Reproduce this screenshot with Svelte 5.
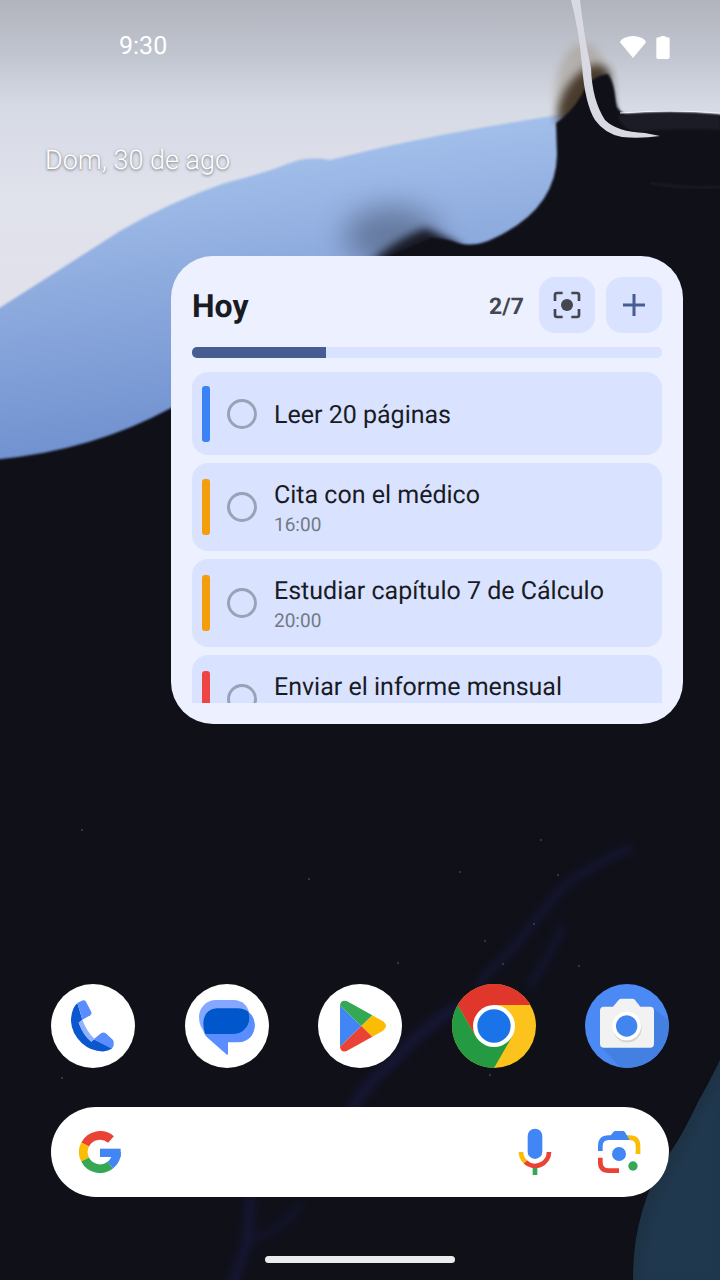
<script lang="ts">
  let tasks = $state([
    { id: 'leer', title: 'Leer 20 páginas', color: '#3b82f6', timed: false, time: '', done: false },
    { id: 'cita', title: 'Cita con el médico', color: '#f59e0b', timed: true, time: '16:00', done: false },
    { id: 'estudiar', title: 'Estudiar capítulo 7 de Cálculo', color: '#f59e0b', timed: true, time: '20:00', done: false },
    { id: 'informe', title: 'Enviar el informe mensual', color: '#ef4444', timed: true, time: '', done: false }
  ]);

  const total = 7;
  const alreadyDone = 2;
  let completed = $derived(alreadyDone + tasks.filter((t) => t.done).length);

  const apps = [
    { name: 'Teléfono', icon: 'phone' },
    { name: 'Mensajes', icon: 'messages' },
    { name: 'Play Store', icon: 'play' },
    { name: 'Chrome', icon: 'chrome' },
    { name: 'Cámara', icon: 'camera' }
  ];

  const stars = [
    [460, 872], [541, 840], [398, 963], [82, 830], [485, 941], [558, 875],
    [534, 924], [503, 964], [579, 966], [490, 1075], [309, 879], [62, 1078]
  ];
</script>

<main class="screen">
  <svg class="wallpaper" viewBox="0 0 720 1280" preserveAspectRatio="xMidYMid slice" color-interpolation-filters="sRGB" aria-hidden="true">
    <defs>
      <linearGradient id="sky" x1="0" y1="0" x2="0" y2="1">
        <stop offset="0" stop-color="#b1b4bd" />
        <stop offset="0.12" stop-color="#c0c4ce" />
        <stop offset="0.24" stop-color="#d6dae4" />
        <stop offset="0.45" stop-color="#e0e2ec" />
        <stop offset="1" stop-color="#e2e0e8" />
      </linearGradient>
      <linearGradient id="wave" gradientUnits="userSpaceOnUse" x1="200" y1="150" x2="240" y2="440">
        <stop offset="0" stop-color="#a5c1ec" />
        <stop offset="0.4" stop-color="#8facdf" />
        <stop offset="1" stop-color="#6f90cf" />
      </linearGradient>
      <filter id="soft1" x="-20%" y="-20%" width="140%" height="140%"><feGaussianBlur stdDeviation="1" /></filter>
      <filter id="soft4" x="-30%" y="-30%" width="160%" height="160%"><feGaussianBlur stdDeviation="4" /></filter>
      <filter id="soft14" x="-60%" y="-80%" width="220%" height="260%"><feGaussianBlur stdDeviation="14" /></filter>
    </defs>
    <rect width="720" height="1280" fill="#0f1018" />
    <path d="M0 0H720V116H560L480 250L200 440L0 440Z" fill="url(#sky)" />
    <path d="M-10 314Q75 260 120 231Q170 202 225 183Q265 173 290 163Q308 156 330 160Q400 142 480 128L570 113V200L480 260L200 470L-10 480Z" fill="url(#wave)" filter="url(#soft1)" />
    <ellipse cx="392" cy="236" rx="48" ry="30" fill="#4b5a78" opacity="0.6" filter="url(#soft14)" />
    <path d="M370 262Q395 240 425 228Q445 236 462 246L440 268Z" fill="#1a1c28" filter="url(#soft4)" />
    <path d="M556 112Q552 66 574 46Q592 38 602 58L612 118Z" fill="#a59b8d" opacity="0.55" filter="url(#soft4)" />
    <path d="M557 122Q558 92 578 74Q598 56 610 72L614 122Z" fill="#3d3020" opacity="0.9" filter="url(#soft4)" />
    <path d="M-10 460Q90 452 171 408L300 310L375 262Q405 250 430 238Q444 238 458 243Q472 247 488 241Q556 212 557 155L556 123Q572 112 582 94Q590 76 608 74Q614 82 616 100Q618 114 628 114Q680 110 730 116V1290H-10Z" fill="#0f1018" filter="url(#soft1)" />
    <path d="M618 115Q670 110 720 115V130Q670 128 640 132Q620 130 618 115Z" fill="#1b1c25" filter="url(#soft1)" />
    <path d="M620 113Q670 109 720 113" fill="none" stroke="#f4f5fb" stroke-width="1" />
    <path d="M611 60Q616 74 618 108" fill="none" stroke="#b9bcc6" stroke-width="1" filter="url(#soft1)" />
    <path d="M571 0H580Q584 36 591 68Q592 100 605 120Q617 132 645 133L660 136Q640 139 622 137Q605 134 595 120Q585 104 582 66Q579 30 571 0Z" fill="#d9d9e3" />
    <path d="M650 183Q685 189 720 187" fill="none" stroke="#191a24" stroke-width="3" filter="url(#soft1)" />

    <g fill="none" stroke="#191a42" stroke-linecap="round" filter="url(#soft4)" opacity="0.7">
      <path d="M630 848Q585 868 560 890Q540 915 510 952Q490 970 478 985" stroke-width="7" />
      <path d="M562 928Q550 955 530 985" stroke-width="6" />
      <path d="M460 1005Q420 1030 400 1055Q370 1080 352 1108" stroke-width="11" />
      <path d="M250 1200Q250 1230 245 1250L232 1285" stroke-width="10" />
      <path d="M250 1238Q280 1234 300 1205" stroke-width="5" />
    </g>
    <path d="M722 1056Q708 1085 699 1100Q680 1140 668 1155Q632 1210 633 1282H722Z" fill="#1e3346" />
    <path d="M722 1072Q710 1100 699 1116Q690 1140 678 1160Q645 1210 641 1282H722Z" fill="#20384e" filter="url(#soft4)" />
    {#each stars as [x, y]}
      <circle cx={x} cy={y} r="1" fill="#3f4150" />
    {/each}
  </svg>

  <header class="status-bar">
    <time>9:30</time>
    <div class="status-icons">
      <svg width="26" height="22" viewBox="0 0 78 66" fill="#fff" aria-hidden="true">
        <path d="M0 19Q2 10 14 5Q39 -5 64 5Q76 10 78 19L39 66Z" />
      </svg>
      <svg width="14" height="23" viewBox="0 0 42 69" fill="#fff" aria-hidden="true">
        <path d="M13 4Q13 0 17 0H25Q29 0 29 4H36Q41 4 41 9V64Q41 69 36 69H6Q1 69 1 64V9Q1 4 6 4Z" />
      </svg>
    </div>
  </header>

  <p class="date">Dom, 30 de ago</p>

  <section class="widget">
    <div class="widget-header">
      <h1>Hoy</h1>
      <span class="count">{completed}/{total}</span>
      <button class="icon-button" aria-label="Enfoque">
        <svg width="28" height="28" viewBox="0 0 84 84" aria-hidden="true">
          <path d="M6 30V12Q6 6 12 6H29M55 6H72Q78 6 78 12V30M78 54V72Q78 78 72 78H55M29 78H12Q6 78 6 72V54" fill="none" stroke="#44474f" stroke-width="8" />
          <circle cx="42" cy="42" r="18" fill="#44474f" />
        </svg>
      </button>
      <button class="icon-button" aria-label="Añadir tarea">
        <svg width="24" height="24" viewBox="0 0 24 24" aria-hidden="true">
          <path d="M12 1V23M1 12H23" stroke="#475d92" stroke-width="3" />
        </svg>
      </button>
    </div>

    <div class="progress" role="progressbar" aria-label="Hoy" aria-valuemin="0" aria-valuemax={total} aria-valuenow={completed}>
      <div class="progress-fill" style="width: {(completed / total) * 100}%"></div>
    </div>

    <ul class="tasks">
      {#each tasks as task (task.id)}
        <li class="task" class:timed={task.timed}>
          <span class="stripe" style="background: {task.color}"></span>
          <input type="checkbox" id={task.id} bind:checked={task.done} />
          <label for={task.id}>
            <span class="task-title">{task.title}</span>
            {#if task.timed}
              <span class="task-time">{task.time}</span>
            {/if}
          </label>
        </li>
      {/each}
    </ul>
  </section>

  <nav class="dock">
    {#each apps as app}
      <button class="app" aria-label={app.name}>
        <svg viewBox="0 0 252 252" aria-hidden="true">
          {#if app.icon === 'phone'}
            <circle cx="126" cy="126" r="126" fill="#fff" />
            <path d="M79 57Q60 75 60 112Q62 148 92 177Q122 204 160 202Q174 200 184 193L128 166L121 173Q98 155 83 116L94 107Z" fill="#0b57d0" />
            <path d="M79 57L92 50Q101 46 105 53L121 84Q123 90 118 94L94 107Z" fill="#5a8dff" />
            <path d="M83 116L94 107Q106 141 131 165L121 173Q97 155 83 116Z" fill="#8fb1ff" />
            <path d="M128 166L150 148Q158 142 166 149L186 168Q190 174 188 184Q187 190 182 194Z" fill="#5a8dff" />
          {:else if app.icon === 'messages'}
            <circle cx="126" cy="126" r="126" fill="#fff" />
            <path d="M158 73A51 51 0 0 1 158 175H129V209Q129 215 124 211L66 160Q54 148 54 125L100 73Z" fill="#5a8dff" />
            <path d="M93 48H146Q186 50 194 92L180 140L64 151Q42 130 42 99A51 51 0 0 1 93 48Z" fill="#84a7ff" />
            <path d="M94 73H158Q178 74 190 83Q195 90 195 98Q195 118 183 132Q169 150 146 150H62Q55 139 55 116Q57 78 94 73Z" fill="#0057cc" />
            <path d="M190 83Q209 98 209 124Q207 168 165 175L146 150Q169 150 183 132Q198 112 190 83Z" fill="#5a8dff" />
          {:else if app.icon === 'play'}
            <circle cx="126" cy="126" r="126" fill="#fff" />
            <path d="M66 64L130 126L66 188Z" fill="#4285f4" />
            <path d="M66 64Q68 46 86 51L163 94L130 126Z" fill="#34a853" />
            <path d="M163 94L195 112Q204 119 204 126Q204 134 195 140L163 158L130 126Z" fill="#fbbc04" />
            <path d="M66 188Q68 207 86 201L163 158L130 126Z" fill="#ea4335" />
          {:else if app.icon === 'chrome'}
            <circle cx="126" cy="126" r="126" fill="#fcc31d" />
            <path d="M17 63A126 126 0 0 1 235 63H126V126L71 157Z" fill="#e1362b" />
            <path d="M17 63A126 126 0 0 0 126 252L181 157L126 126L71 157Z" fill="#249a42" />
            <circle cx="126" cy="126" r="63" fill="#fff" />
            <circle cx="126" cy="126" r="50" fill="#1a73e8" />
          {:else}
            <circle cx="126" cy="126" r="126" fill="#4b89f5" />
            <path d="M207 74L250 108A126 126 0 0 1 106 250L50 190Z" fill="#4380e2" />
            <path d="M84 68L101 48Q104 44 109 44H142Q147 44 150 48L166 68H195Q207 68 207 80V179Q207 191 195 191H57Q45 191 45 179V80Q45 68 57 68Z" fill="#f2f2f2" />
            <circle cx="127" cy="132" r="43" fill="#d4d4d4" />
            <circle cx="125" cy="126" r="43" fill="#fff" />
            <circle cx="125" cy="126" r="32" fill="#4285f0" />
          {/if}
        </svg>
      </button>
    {/each}
  </nav>

  <div class="search">
    <button class="search-button" aria-label="Google">
      <svg width="42" height="42" viewBox="-63 -63 126 126" fill="none" stroke-width="26" aria-hidden="true">
        <path d="M33 -37.5A50 50 0 0 0 -44.6 -22.7" stroke="#ea4335" />
        <path d="M-44.6 -22.7A50 50 0 0 0 -44.6 22.7" stroke="#fbbc04" />
        <path d="M-44.6 22.7A50 50 0 0 0 30.8 39.4" stroke="#34a853" />
        <path d="M30.8 39.4A50 50 0 0 0 50 0" stroke="#4285f4" />
        <rect x="0" y="-10" width="62" height="25" fill="#4285f4" stroke="none" />
      </svg>
    </button>
    <div class="search-actions">
      <button class="search-button" aria-label="Búsqueda por voz">
        <svg width="34" height="48" viewBox="85 84 102 144" fill="none" stroke-width="14" aria-hidden="true">
          <rect x="114" y="86" width="44" height="91" rx="22" fill="#4285f4" />
          <path d="M94 156A42 42 0 0 0 107 186" stroke="#fbbc04" />
          <path d="M107 186A42 42 0 0 0 178 156" stroke="#ea4335" />
          <path d="M136 204V225" stroke="#34a853" />
        </svg>
      </button>
      <button class="search-button" aria-label="Google Lens">
        <svg width="44" height="44" viewBox="322 89 132 132" fill="none" stroke-width="14" aria-hidden="true">
          <path d="M412 112H420Q445 112 445 137V161" stroke="#fbbc04" />
          <path d="M332 152V137Q332 112 357 112H388" stroke="#4285f4" />
          <path d="M362 119V106L371 95Q373 92 377 92H400Q404 92 406 96L420 119Z" fill="#4285f4" />
          <path d="M332 172V186Q332 211 357 211H388" stroke="#ea4335" />
          <circle cx="388" cy="161" r="21" fill="#4285f4" />
          <circle cx="430" cy="197" r="14" fill="#34a853" />
        </svg>
      </button>
    </div>
  </div>

  <div class="home-handle"></div>
</main>

<style>
  :global(body) {
    margin: 0;
    background: #0f1018;
    font-family: Roboto, "Liberation Sans", sans-serif;
    text-rendering: geometricPrecision;
  }

  .screen {
    position: relative;
    display: flex;
    flex-direction: column;
    min-height: 100vh;
    box-sizing: border-box;
    padding-bottom: 17px;
    overflow: hidden;
    isolation: isolate;
  }

  .wallpaper {
    position: absolute;
    inset: 0;
    z-index: -1;
    width: 100%;
    height: 100%;
  }

  button {
    display: flex;
    align-items: center;
    justify-content: center;
    padding: 0;
    border: none;
    background: none;
    cursor: pointer;
  }

  .status-bar {
    display: flex;
    align-items: center;
    justify-content: space-between;
    padding: 31px 50px 0 119px;
    color: #fff;
    font-size: 25px;
    line-height: 32px;
  }

  .status-icons {
    display: flex;
    align-items: center;
    gap: 10px;
  }

  .date {
    margin: 81px 45px 0;
    color: #fff;
    font-size: 27px;
    line-height: 32px;
    font-weight: 300;
    text-shadow: 0 1px 3px rgba(0, 0, 0, 0.55);
  }

  .widget {
    margin: 80px 37px 40px 171px;
    padding: 21px;
    border-radius: 42px;
    background: #edf0ff;
    color: #191b23;
  }

  .widget-header {
    display: flex;
    align-items: center;
    gap: 11px;
  }

  h1 {
    flex: 1;
    margin: 0;
    padding-top: 2px;
    font-size: 32px;
    line-height: 40px;
    font-weight: 700;
  }

  .count {
    margin-right: 4px;
    padding-top: 2px;
    color: #44474f;
    font-size: 23px;
    font-weight: 700;
  }

  .icon-button {
    width: 56px;
    height: 56px;
    border-radius: 16px;
    background: #d9e2ff;
  }

  .progress {
    height: 11px;
    margin: 14px 0;
    border-radius: 5px;
    background: #d9e2ff;
    overflow: hidden;
  }

  .progress-fill {
    height: 100%;
    background: #475d92;
  }

  .tasks {
    display: flex;
    flex-direction: column;
    gap: 8px;
    max-height: 331px;
    margin: 0;
    padding: 0;
    list-style: none;
    overflow: hidden;
  }

  .task {
    display: flex;
    flex-shrink: 0;
    align-items: center;
    box-sizing: border-box;
    min-height: 83px;
    padding: 0 10px;
    border-radius: 16px;
    background: #d9e2ff;
  }

  .task.timed {
    min-height: 88px;
  }

  .stripe {
    width: 8px;
    height: 56px;
    border-radius: 3px;
  }

  .task input {
    appearance: none;
    width: 30px;
    height: 30px;
    margin: 0 17px;
    border: 3px solid #98a3b5;
    border-radius: 50%;
  }

  .task input:checked {
    background: #475d92;
    border-color: #475d92;
  }

  .task label {
    display: flex;
    flex: 1;
    flex-direction: column;
    padding-top: 4px;
  }

  .task-title {
    font-size: 25px;
    line-height: 32px;
  }

  .task-time {
    min-height: 26px;
    color: #747984;
    font-size: 19px;
    line-height: 26px;
  }

  .dock {
    display: flex;
    justify-content: space-between;
    margin: auto 51px 39px;
  }

  .app {
    width: 84px;
    height: 84px;
    border-radius: 50%;
  }

  .app svg {
    width: 100%;
    height: 100%;
  }

  .search {
    display: flex;
    align-items: center;
    justify-content: space-between;
    height: 90px;
    margin: 0 51px 59px;
    padding: 0 28px;
    box-sizing: border-box;
    border-radius: 45px;
    background: #fff;
  }

  .search-actions {
    display: flex;
    align-items: center;
    gap: 45px;
  }

  .home-handle {
    align-self: center;
    width: 190px;
    height: 7px;
    border-radius: 4px;
    background: #ececee;
  }
</style>
